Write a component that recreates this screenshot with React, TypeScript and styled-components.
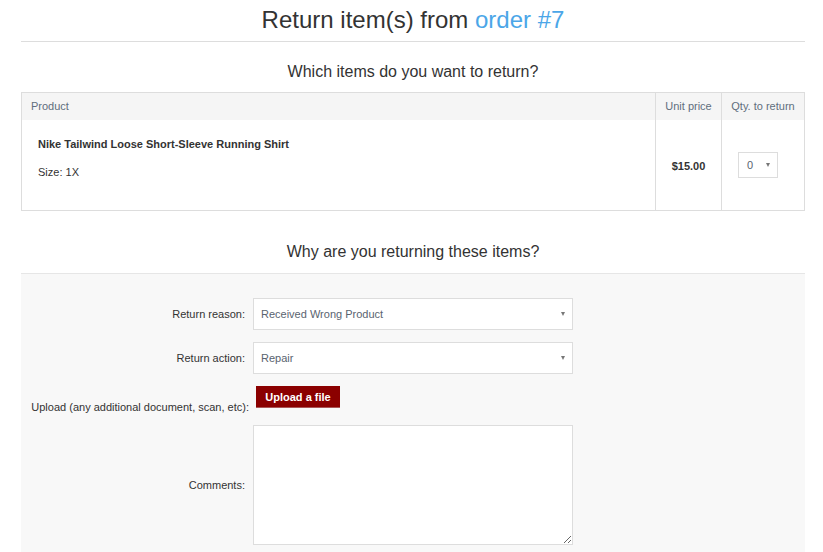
import React from 'react';
import styled, { createGlobalStyle } from 'styled-components';

const GlobalStyle = createGlobalStyle`
  body {
    margin: 0;
    background: #fff;
    font-family: "Liberation Sans", Arial, sans-serif;
    color: #333;
  }
`;

interface SelectProps {
  value: string;
  small?: boolean;
}

const FakeSelect: React.FC<SelectProps> = ({ value, small }) => (
  <SelectBox $small={small}>
    <span>{value}</span>
    <Caret />
  </SelectBox>
);

const App: React.FC = () => (
  <Page>
    <GlobalStyle />
    <Title>
      Return item(s) from <OrderLink href="#">order #7</OrderLink>
    </Title>

    <SectionHeading>Which items do you want to return?</SectionHeading>

    <ItemsTable>
      <thead>
        <tr>
          <HeadCell $align="left">Product</HeadCell>
          <HeadCell $width={66}>Unit price</HeadCell>
          <HeadCell $width={83}>Qty. to return</HeadCell>
        </tr>
      </thead>
      <tbody>
        <tr>
          <ProductCell>
            <ProductName>Nike Tailwind Loose Short-Sleeve Running Shirt</ProductName>
            <ProductMeta>Size: 1X</ProductMeta>
          </ProductCell>
          <PriceCell>$15.00</PriceCell>
          <QtyCell>
            <FakeSelect value="0" small />
          </QtyCell>
        </tr>
      </tbody>
    </ItemsTable>

    <SectionHeading $top={31}>Why are you returning these items?</SectionHeading>

    <FormPanel>
      <FormRow>
        <Label>Return reason:</Label>
        <FakeSelect value="Received Wrong Product" />
      </FormRow>
      <FormRow>
        <Label>Return action:</Label>
        <FakeSelect value="Repair" />
      </FormRow>
      <FormRow $bottom>
        <Label $end>Upload (any additional document, scan, etc):</Label>
        <UploadButton type="button">Upload a file</UploadButton>
      </FormRow>
      <FormRow>
        <Label>Comments:</Label>
        <Comments />
      </FormRow>
    </FormPanel>
  </Page>
);

export default App;

const Page = styled.div`
  padding: 0 18px 0 21px;
`;

const Title = styled.h1`
  margin: 0;
  padding: 7px 0 8px;
  font-size: 24px;
  line-height: 26px;
  font-weight: normal;
  text-align: center;
  color: #333;
  border-bottom: 1px solid #ddd;
`;

const OrderLink = styled.a`
  color: #4ba6e8;
  text-decoration: none;
`;

const SectionHeading = styled.h2<{ $top?: number }>`
  margin: ${p => p.$top ?? 20}px 0 ${p => (p.$top ? 11 : 10)}px;
  font-size: 16px;
  line-height: 20px;
  font-weight: normal;
  text-align: center;
  color: #333;
`;

const ItemsTable = styled.table`
  width: 100%;
  border-collapse: collapse;
  border: 1px solid #ddd;
  font-size: 11px;
`;

const HeadCell = styled.th<{ $align?: string; $width?: number }>`
  height: 27px;
  padding: 0 9px;
  width: ${p => (p.$width ? `${p.$width}px` : 'auto')};
  box-sizing: border-box;
  background: #f5f5f5;
  color: #5f6e7d;
  font-weight: normal;
  text-align: ${p => p.$align || 'center'};
  border-left: 1px solid #ddd;
  white-space: nowrap;
`;

const ProductCell = styled.td`
  height: 91px;
  box-sizing: border-box;
  padding: 17px 16px 0;
  vertical-align: top;
`;

const ProductName = styled.div`
  font-weight: bold;
  line-height: 14px;
  color: #333;
`;

const ProductMeta = styled.div`
  margin-top: 14px;
  line-height: 14px;
  color: #333;
`;

const PriceCell = styled.td`
  padding-top: 3px;
  text-align: center;
  font-weight: bold;
  color: #333;
  border-left: 1px solid #ddd;
`;

const QtyCell = styled.td`
  padding: 1px 0 0 16px;
  text-align: left;
  border-left: 1px solid #ddd;
`;

const SelectBox = styled.div<{ $small?: boolean }>`
  display: ${p => (p.$small ? 'inline-flex' : 'flex')};
  align-items: center;
  justify-content: space-between;
  box-sizing: border-box;
  width: ${p => (p.$small ? 40 : 320)}px;
  height: ${p => (p.$small ? 26 : 32)}px;
  padding: 0 7px 0 ${p => (p.$small ? 8 : 7)}px;
  background: #fff;
  border: 1px solid #ddd;
  font-size: 11px;
  color: #59636f;
  vertical-align: middle;
`;

const Caret = styled.span`
  width: 0;
  height: 0;
  border-left: 2.5px solid transparent;
  border-right: 2.5px solid transparent;
  border-top: 4px solid #777;
`;

const FormPanel = styled.div`
  display: flex;
  flex-direction: column;
  gap: 12px;
  min-height: 300px;
  padding-top: 24px;
  background: #f8f8f8;
  border-top: 1px solid #e6e6e6;
`;

const FormRow = styled.div<{ $bottom?: boolean }>`
  display: grid;
  grid-template-columns: 224px 320px;
  column-gap: 8px;
  align-items: center;
  padding-bottom: ${p => (p.$bottom ? 5 : 0)}px;
`;

const Label = styled.label<{ $end?: boolean }>`
  text-align: right;
  font-size: 11px;
  line-height: 14px;
  color: #333;
  white-space: nowrap;
  align-self: ${p => (p.$end ? 'end' : 'center')};
  margin-bottom: ${p => (p.$end ? -6 : 0)}px;
  margin-right: ${p => (p.$end ? -4 : 0)}px;
`;

const UploadButton = styled.button`
  justify-self: start;
  margin-left: 3px;
  width: 84px;
  height: 22px;
  padding: 0;
  border: none;
  border-bottom: 1px solid #a55;
  background: #8b0000;
  color: #fff;
  font-family: "Liberation Sans", Arial, sans-serif;
  font-size: 11px;
  font-weight: bold;
  cursor: pointer;
`;

const Comments = styled.textarea`
  box-sizing: border-box;
  width: 320px;
  height: 120px;
  margin: 0;
  border: 1px solid #ddd;
  background: #fff;
  resize: vertical;
  font-family: "Liberation Sans", Arial, sans-serif;
  font-size: 11px;
`;
